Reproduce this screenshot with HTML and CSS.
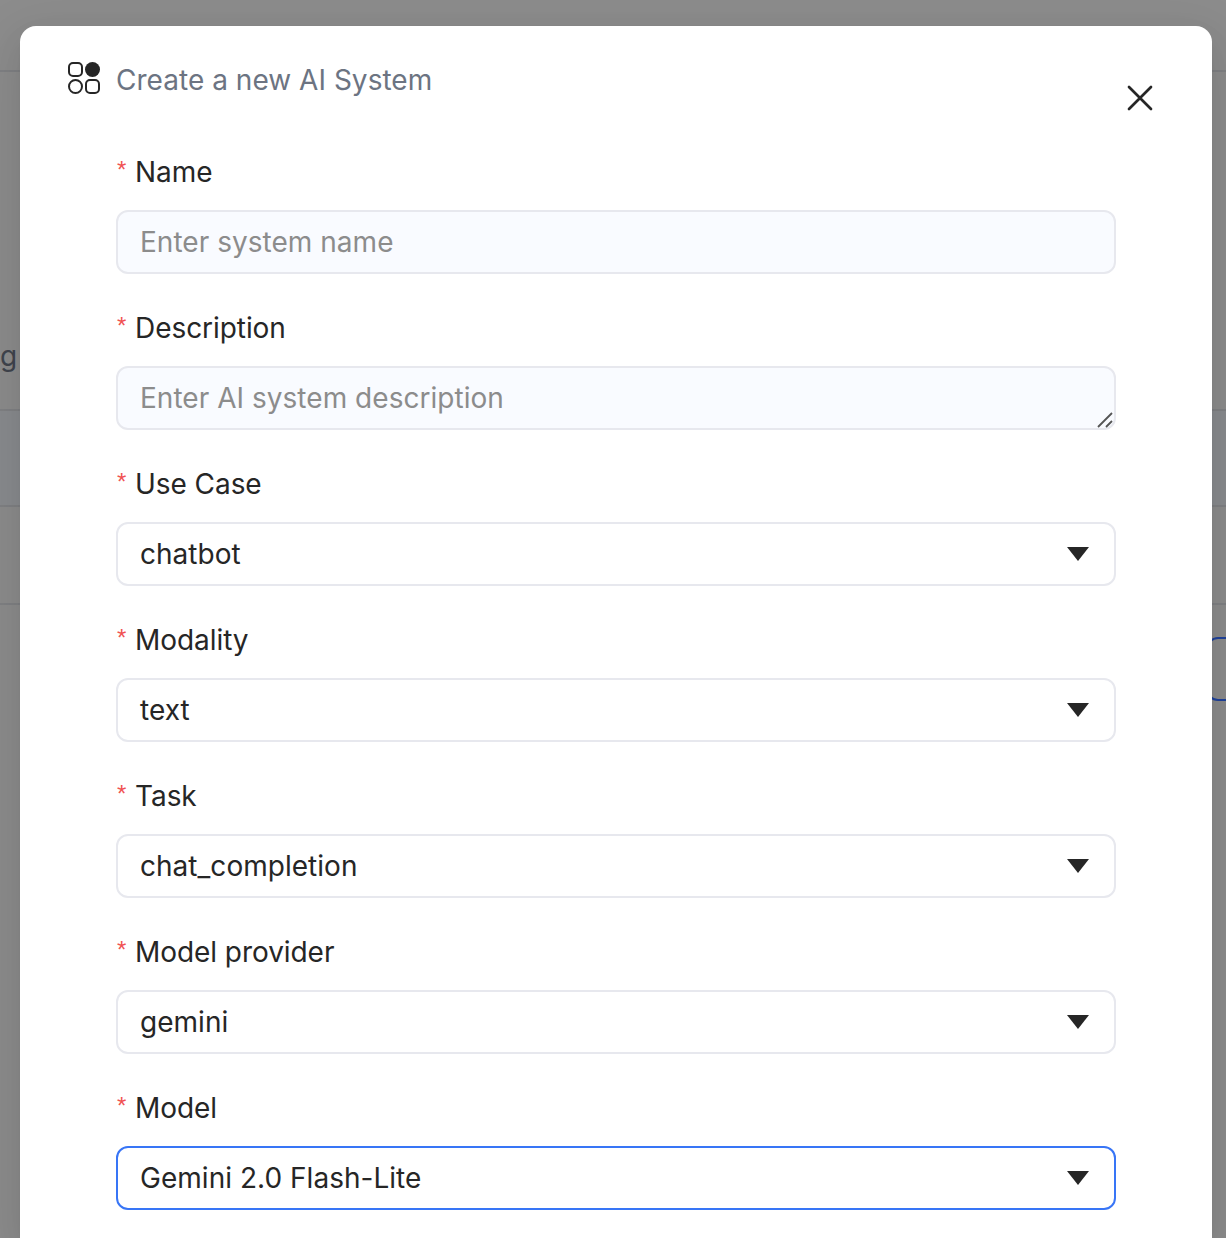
FILE: index.html
```html
<!DOCTYPE html>
<html lang="en">
<head>
<meta charset="utf-8">
<title>Create a new AI System</title>
<link rel="stylesheet" href="styles.css">
</head>
<body>
<div class="page">
  <div class="page-header"></div>
  <div class="page-intro"><span>g</span></div>
  <div class="table-head"></div>
  <div class="table-row"></div>
  <div class="page-footer"><div class="page-button"></div></div>
</div>
<div class="mask">
  <main class="modal" role="dialog" aria-labelledby="title">
    <header class="modal-header">
      <svg class="logo" width="32" height="32" viewBox="0 0 32 32" fill="none" stroke="#262626" stroke-width="2">
        <rect x="1" y="1" width="13" height="13" rx="4"/>
        <circle cx="24.5" cy="7.5" r="7.5" fill="#262626" stroke="none"/>
        <circle cx="7.5" cy="24.5" r="6.5"/>
        <rect x="18" y="18" width="13" height="13" rx="4"/>
      </svg>
      <h1 class="title" id="title">Create a new AI System</h1>
      <svg class="close" width="26" height="26" viewBox="0 0 26 26" stroke="#262626" stroke-width="2.7" stroke-linecap="round"><path d="M2 2L24 24M24 2L2 24"/></svg>
    </header>
    <form class="form">
      <div class="field">
        <label class="label" for="name">Name</label>
        <input class="control filled" id="name" placeholder="Enter system name">
      </div>
      <div class="field">
        <label class="label" for="description">Description</label>
        <div class="area">
          <textarea class="control filled" id="description" rows="1" placeholder="Enter AI system description"></textarea>
          <svg class="grip" width="16" height="16" viewBox="0 0 16 16" stroke="#555" stroke-width="1.8"><path d="M1 15L15 1M9 15L15 9"/></svg>
        </div>
      </div>
      <div class="field">
        <span class="label">Use Case</span>
        <div class="control select"><span>chatbot</span><svg class="caret" width="22" height="14" viewBox="0 0 22 14"><path d="M0 0H22L11 14Z"/></svg></div>
      </div>
      <div class="field">
        <span class="label">Modality</span>
        <div class="control select"><span>text</span><svg class="caret" width="22" height="14" viewBox="0 0 22 14"><path d="M0 0H22L11 14Z"/></svg></div>
      </div>
      <div class="field">
        <span class="label">Task</span>
        <div class="control select"><span>chat_completion</span><svg class="caret" width="22" height="14" viewBox="0 0 22 14"><path d="M0 0H22L11 14Z"/></svg></div>
      </div>
      <div class="field">
        <span class="label">Model provider</span>
        <div class="control select"><span>gemini</span><svg class="caret" width="22" height="14" viewBox="0 0 22 14"><path d="M0 0H22L11 14Z"/></svg></div>
      </div>
      <div class="field">
        <span class="label">Model</span>
        <div class="control select focused"><span>Gemini 2.0 Flash-Lite</span><svg class="caret" width="22" height="14" viewBox="0 0 22 14"><path d="M0 0H22L11 14Z"/></svg></div>
      </div>
    </form>
  </main>
</div>
</body>
</html>
```

FILE: styles.css
```css
* { box-sizing: border-box; }

body {
  margin: 0;
  height: 1238px;
  overflow: hidden;
  position: relative;
  font: 400 28px/44px Inter, sans-serif;
  letter-spacing: 0.03px;
  color: #262626;
}

/* Page behind the dialog, seen through the mask */
.page {
  height: 1238px;
  background: #8c8c8c;
}
.page-header { height: 72px; border-bottom: 2px solid #7f8083; }
.page-intro {
  height: 339px;
  padding-top: 262px;
  border-bottom: 2px solid #7f8083;
  color: #3f444d;
}
.table-head { height: 96px; background: #898b8e; border-bottom: 2px solid #7f8083; }
.table-row { height: 98px; border-bottom: 2px solid #7f8083; }
.page-footer { padding-top: 32px; display: flex; justify-content: flex-end; }
.page-button {
  width: 20px;
  height: 64px;
  border: 2px solid #1f429b;
  border-right: 0;
  border-radius: 12px 0 0 12px;
}

.mask {
  position: absolute;
  inset: 0;
  padding: 26px 14px 0 20px;
}
.modal {
  height: 1212px;
  padding: 32px 48px 0;
  border-radius: 16px 16px 0 0;
  background: #fff;
  box-shadow: 0 12px 32px rgba(0, 0, 0, .08), 0 6px 12px -8px rgba(0, 0, 0, .12), 0 18px 56px 16px rgba(0, 0, 0, .05);
}
.modal-header { display: flex; align-items: flex-start; height: 92px; }
.logo { margin-top: 4px; }
.title {
  flex: 1;
  margin: 0 0 0 16px;
  font: inherit;
  color: #6c7482;
}
.close { margin: 27px 11px 0 0; }

.form { display: flex; flex-direction: column; gap: 32px; padding: 0 48px; }
.field { display: flex; flex-direction: column; gap: 16px; }
.label { display: flex; height: 44px; letter-spacing: -0.06px; }
.label::before {
  content: "*";
  width: 18px;
  padding-left: 1px;
  font-family: "Liberation Sans", sans-serif;
  font-size: 24px;
  line-height: 40px;
  letter-spacing: 0;
  color: #f05252;
}
.control {
  display: block;
  width: 100%;
  height: 64px;
  margin: 0;
  padding: 8px 22px;
  border: 2px solid #e7e8ee;
  border-radius: 12px;
  background: #fff;
  font: inherit;
  letter-spacing: inherit;
  color: inherit;
  outline: 0;
  resize: none;
  overflow: hidden;
}
.filled { background: #f9fbff; }
.control::placeholder { color: #8c8c8c; }
.select {
  display: flex;
  align-items: center;
  justify-content: space-between;
  padding-right: 25px;
}
.focused { border-color: #3875f6; }
.caret { fill: #262626; }
.area { position: relative; }
.grip { position: absolute; right: 3.5px; bottom: 2.5px; }
```
